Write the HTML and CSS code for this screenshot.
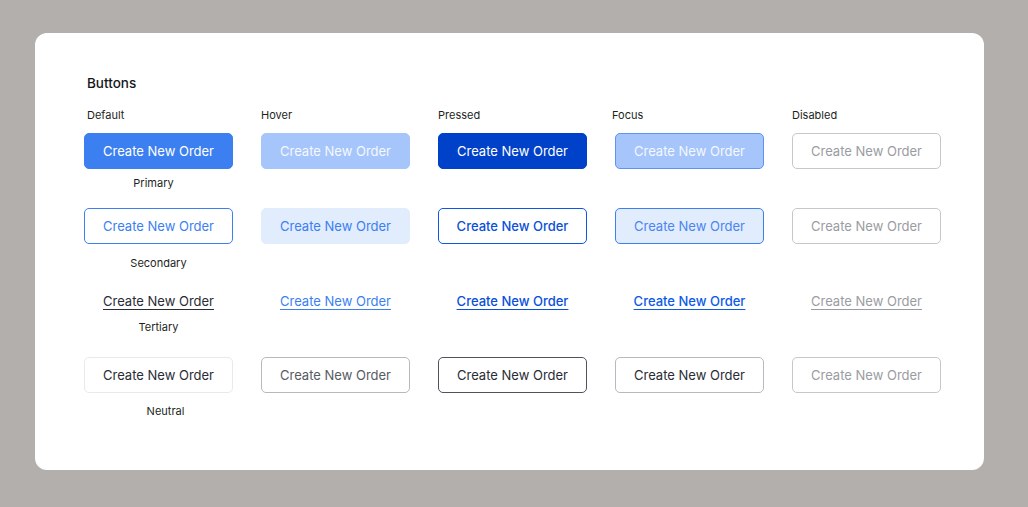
FILE: index.html
```html
<!DOCTYPE html>
<html>
<head>
<meta charset="utf-8">
<link rel="stylesheet" href="styles.css">
</head>
<body>
<div class="card">
  <h1 class="title">Buttons</h1>
  <div class="grid heads">
    <div class="head h-default">Default</div>
    <div class="head">Hover</div>
    <div class="head">Pressed</div>
    <div class="head h-focus">Focus</div>
    <div class="head">Disabled</div>
  </div>

  <div class="grid row-primary">
    <button class="btn primary">Create New Order</button>
    <button class="btn primary hover">Create New Order</button>
    <button class="btn primary pressed">Create New Order</button>
    <button class="btn primary focus">Create New Order</button>
    <button class="btn disabled">Create New Order</button>
  </div>
  <div class="caption cap-primary">Primary</div>

  <div class="grid row-secondary">
    <button class="btn secondary">Create New Order</button>
    <button class="btn secondary hover">Create New Order</button>
    <button class="btn secondary pressed">Create New Order</button>
    <button class="btn secondary focus">Create New Order</button>
    <button class="btn disabled">Create New Order</button>
  </div>
  <div class="caption cap-secondary">Secondary</div>

  <div class="grid row-tertiary">
    <button class="btn tertiary">Create New Order</button>
    <button class="btn tertiary hover">Create New Order</button>
    <button class="btn tertiary pressed">Create New Order</button>
    <button class="btn tertiary focus">Create New Order</button>
    <button class="btn tertiary off">Create New Order</button>
  </div>
  <div class="caption cap-tertiary">Tertiary</div>

  <div class="grid row-neutral">
    <button class="btn neutral">Create New Order</button>
    <button class="btn neutral hover">Create New Order</button>
    <button class="btn neutral pressed">Create New Order</button>
    <button class="btn neutral focus">Create New Order</button>
    <button class="btn disabled">Create New Order</button>
  </div>
  <div class="caption cap-neutral">Neutral</div>
</div>
</body>
</html>
```
FILE: styles.css
```css
* { box-sizing: border-box; }
html, body { margin: 0; padding: 0; }
body {
  background: #b3afad;
  font-family: Inter, "Noto Sans", "Liberation Sans", sans-serif;
  color: #1d1f24;
  width: 1028px;
  height: 507px;
  overflow: hidden;
}
.card {
  margin: 33px 0 0 35px;
  width: 949px;
  height: 437px;
  background: #ffffff;
  border-radius: 12px;
  padding: 40px 0 0 49px;
}
.title {
  margin: 0 0 14px 3px;
  font-size: 13.5px;
  font-weight: 500;
  line-height: 20px;
  color: #15171b;
}
.grid {
  display: grid;
  grid-template-columns: repeat(5, 149px);
  column-gap: 28px;
}
.heads { margin-bottom: 10px; }
.head {
  font-size: 11px;
  line-height: 16px;
  color: #1d1f24;
}
.h-default { padding-left: 3px; }
.h-focus { margin-left: -3px; }

.btn {
  height: 36px;
  width: 149px;
  border-radius: 5px;
  border: 1px solid transparent;
  background: #fff;
  font-family: Inter, "Noto Sans", "Liberation Sans", sans-serif;
  font-size: 13px;
  font-weight: 400;
  padding: 0;
  text-align: center;
  cursor: pointer;
}
.primary { background: #3b7ff1; border-color: #3b7ff1; color: #fff; }
.primary.hover { background: #a6c5fa; border-color: #a6c5fa; color: #f4f8ff; }
.primary.pressed { background: #0041c9; border-color: #0041c9; color: #fff; }
.primary.focus { background: #a6c5fa; border-color: #5d93f2; color: #f4f8ff; }

.disabled { background: #fff; border-color: #c6c7cb; color: #9a9ca2; }

.secondary { background: #fff; border-color: #3b7ff1; color: #3b7ff1; }
.secondary.hover { background: #e1ecfd; border-color: #e1ecfd; color: #3b7ff1; }
.secondary.pressed { background: #fff; border-color: #0c57e6; color: #0a4fd9; font-weight: 500; }
.secondary.focus { background: #e1ecfd; border-color: #3b7ff1; color: #4a85f0; }

.tertiary {
  background: transparent;
  color: #2a2d35;
  text-decoration: underline;
  text-underline-offset: 3px;
  text-decoration-thickness: 1px;
}
.tertiary.hover { color: #3b7ff1; }
.tertiary.pressed { color: #0a4fd9; font-weight: 500; }
.tertiary.focus { color: #0c5ae6; font-weight: 500; }
.tertiary.off { color: #9a9ca2; }

.neutral { background: #fff; border-color: #e9e9ec; color: #2a2d35; }
.neutral.hover { border-color: #b7b9be; color: #575b63; }
.neutral.pressed { border-color: #4e535c; color: #2a2d35; }
.neutral.focus { border-color: #b7b9be; color: #2a2d35; }

.caption {
  width: 149px;
  text-align: center;
  font-size: 11px;
  line-height: 16px;
  color: #1d1f24;
}
.row-primary { margin-bottom: 6px; }
.cap-primary { margin-bottom: 17px; margin-left: -5px; }
.row-secondary { margin-bottom: 11px; }
.cap-secondary { margin-bottom: 12px; }
.row-tertiary { margin-bottom: 0; }
.cap-tertiary { margin-bottom: 22px; }
.row-neutral { margin-bottom: 10px; }
.cap-neutral { margin-left: 7px; }
```
